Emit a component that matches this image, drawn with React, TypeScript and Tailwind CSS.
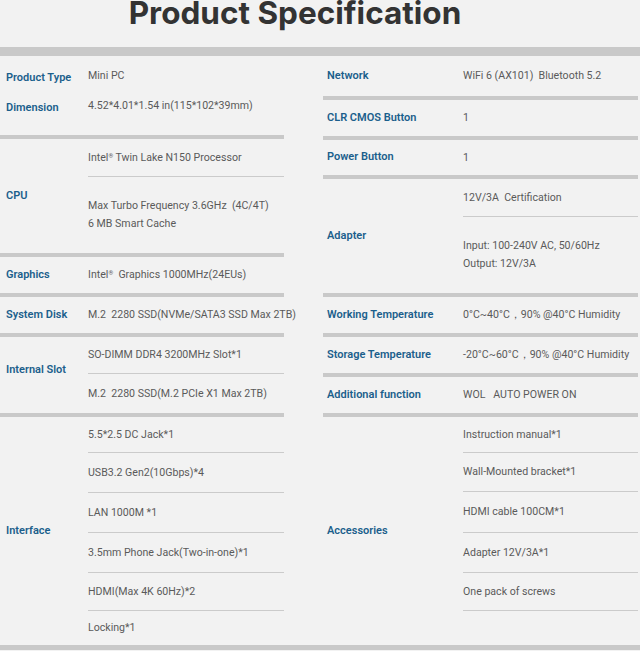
/**
 * Product Specification sheet – Mini PC
 *
 * Two spec columns separated by thick grey bars. Multi-value specs
 * split into sub-rows divided by thin lines.
 */
import type { ReactNode } from "react";

type Row = { h: number; content?: ReactNode };

const FONT = "font-['Roboto','Liberation_Sans',sans-serif]";

function Bar() {
  return <div className="h-[4px] bg-[#c9c9c9]" />;
}

function Line() {
  return <div className="h-px bg-[#cbcbcb]" />;
}

function Label({ children }: { children: ReactNode }) {
  return (
    <span className="whitespace-nowrap text-[11px] font-semibold text-[#1b5f8c]">
      {children}
    </span>
  );
}

function Value({ children }: { children: ReactNode }) {
  return (
    <span className="whitespace-pre text-[10.6px] leading-[18px] text-[#5a5a5a]">
      {children}
    </span>
  );
}

function Reg() {
  return <sup className="text-[6px]">®</sup>;
}

function Section({
  label,
  labelW,
  labelPad,
  rows,
  labelShift = "",
}: {
  label: string;
  labelW: string;
  labelPad: string;
  rows: Row[];
  labelShift?: string;
}) {
  return (
    <div className="flex">
      <div className={`flex shrink-0 items-center ${labelW} ${labelPad} ${labelShift}`}>
        <Label>{label}</Label>
      </div>
      <div className="flex flex-1 flex-col">
        {rows.map((row, i) => (
          <div key={i}>
            {i > 0 && <Line />}
            <div className="flex flex-col justify-center" style={{ height: row.h }}>
              {row.content}
            </div>
          </div>
        ))}
      </div>
    </div>
  );
}

const one = (h: number, text: ReactNode): Row[] => [{ h, content: <Value>{text}</Value> }];

export default function App() {
  const L = { labelW: "w-[88px]", labelPad: "pl-[6px]" };
  const R = { labelW: "w-[140px]", labelPad: "pl-[4px]" };

  return (
    <div className={`h-[651px] w-[640px] overflow-hidden bg-[#f2f2f2] ${FONT}`}>
      {/* ---- Title ---- */}
      <div className="h-[47px] pr-[50px] pt-[1px]">
        <h1 className="text-center font-['Inter',sans-serif] text-[31.5px] font-bold leading-[24px] text-[#333]">
          Product Specification
        </h1>
      </div>
      <div className="h-[9px] bg-[#c9c9c9]" />

      <div className="flex">
        {/* ---- Left column ---- */}
        <div className="flex w-[284px] flex-col">
          <div className="flex h-[79px] flex-col">
            <div className="flex h-[40px] items-center">
              <div className="w-[88px] pl-[6px]">
                <Label>Product Type</Label>
              </div>
              <Value>Mini PC</Value>
            </div>
            <div className="flex h-[20px] items-center">
              <div className="w-[88px] pl-[6px]">
                <Label>Dimension</Label>
              </div>
              <Value>4.52*4.01*1.54 in(115*102*39mm)</Value>
            </div>
          </div>
          <Bar />
          <Section
            {...L}
            label="CPU"
            rows={[
              {
                h: 37,
                content: (
                  <Value>
                    Intel<Reg /> Twin Lake N150 Processor
                  </Value>
                ),
              },
              {
                h: 76,
                content: (
                  <>
                    <Value>Max Turbo Frequency 3.6GHz  (4C/4T)</Value>
                    <Value>6 MB Smart Cache</Value>
                  </>
                ),
              },
            ]}
          />
          <Bar />
          <Section
            {...L}
            label="Graphics"
            rows={one(
              36,
              <>
                Intel<Reg />  Graphics 1000MHz(24EUs)
              </>
            )}
          />
          <Bar />
          <Section {...L} label="System Disk" rows={one(36, "M.2  2280 SSD(NVMe/SATA3 SSD Max 2TB)")} />
          <Bar />
          <Section
            {...L}
            label="Internal Slot"
            labelShift="pb-[9px]"
            rows={[
              { h: 36, content: <Value>SO-DIMM DDR4 3200MHz Slot*1</Value> },
              { h: 39, content: <Value>M.2  2280 SSD(M.2 PCIe X1 Max 2TB)</Value> },
            ]}
          />
          <Bar />
          <Section
            {...L}
            label="Interface"
            rows={[
              { h: 35, content: <Value>5.5*2.5 DC Jack*1</Value> },
              { h: 39, content: <Value>USB3.2 Gen2(10Gbps)*4</Value> },
              { h: 39, content: <Value>LAN 1000M *1</Value> },
              { h: 39, content: <Value>3.5mm Phone Jack(Two-in-one)*1</Value> },
              { h: 37, content: <Value>HDMI(Max 4K 60Hz)*2</Value> },
              { h: 34, content: <Value>Locking*1</Value> },
            ]}
          />
        </div>

        <div className="w-[39px] shrink-0" />

        {/* ---- Right column ---- */}
        <div className="flex w-[315px] flex-col">
          <Section {...R} label="Network" rows={one(40, "WiFi 6 (AX101)  Bluetooth 5.2")} />
          <Bar />
          <Section {...R} label="CLR CMOS Button" rows={one(36, "1")} />
          <Bar />
          <Section {...R} label="Power Button" rows={one(35, "1")} />
          <Bar />
          <Section
            {...R}
            label="Adapter"
            rows={[
              { h: 37, content: <Value>12V/3A  Certification</Value> },
              {
                h: 76,
                content: (
                  <>
                    <Value>Input: 100-240V AC, 50/60Hz</Value>
                    <Value>Output: 12V/3A</Value>
                  </>
                ),
              },
            ]}
          />
          <Bar />
          <Section {...R} label="Working Temperature" rows={one(36, "0°C~40°C，90% @40°C Humidity")} />
          <Bar />
          <Section {...R} label="Storage Temperature" rows={one(36, "-20°C~60°C，90% @40°C Humidity")} />
          <Bar />
          <Section {...R} label="Additional function" rows={one(36, "WOL   AUTO POWER ON")} />
          <Bar />
          <Section
            {...R}
            label="Accessories"
            rows={[
              { h: 35, content: <Value>Instruction manual*1</Value> },
              { h: 38, content: <Value>Wall-Mounted bracket*1</Value> },
              { h: 40, content: <Value>HDMI cable 100CM*1</Value> },
              { h: 39, content: <Value>Adapter 12V/3A*1</Value> },
              { h: 37, content: <Value>One pack of screws</Value> },
              { h: 34 },
            ]}
          />
        </div>
      </div>

      <div className="h-[5px] bg-[#c9c9c9]" />
    </div>
  );
}
